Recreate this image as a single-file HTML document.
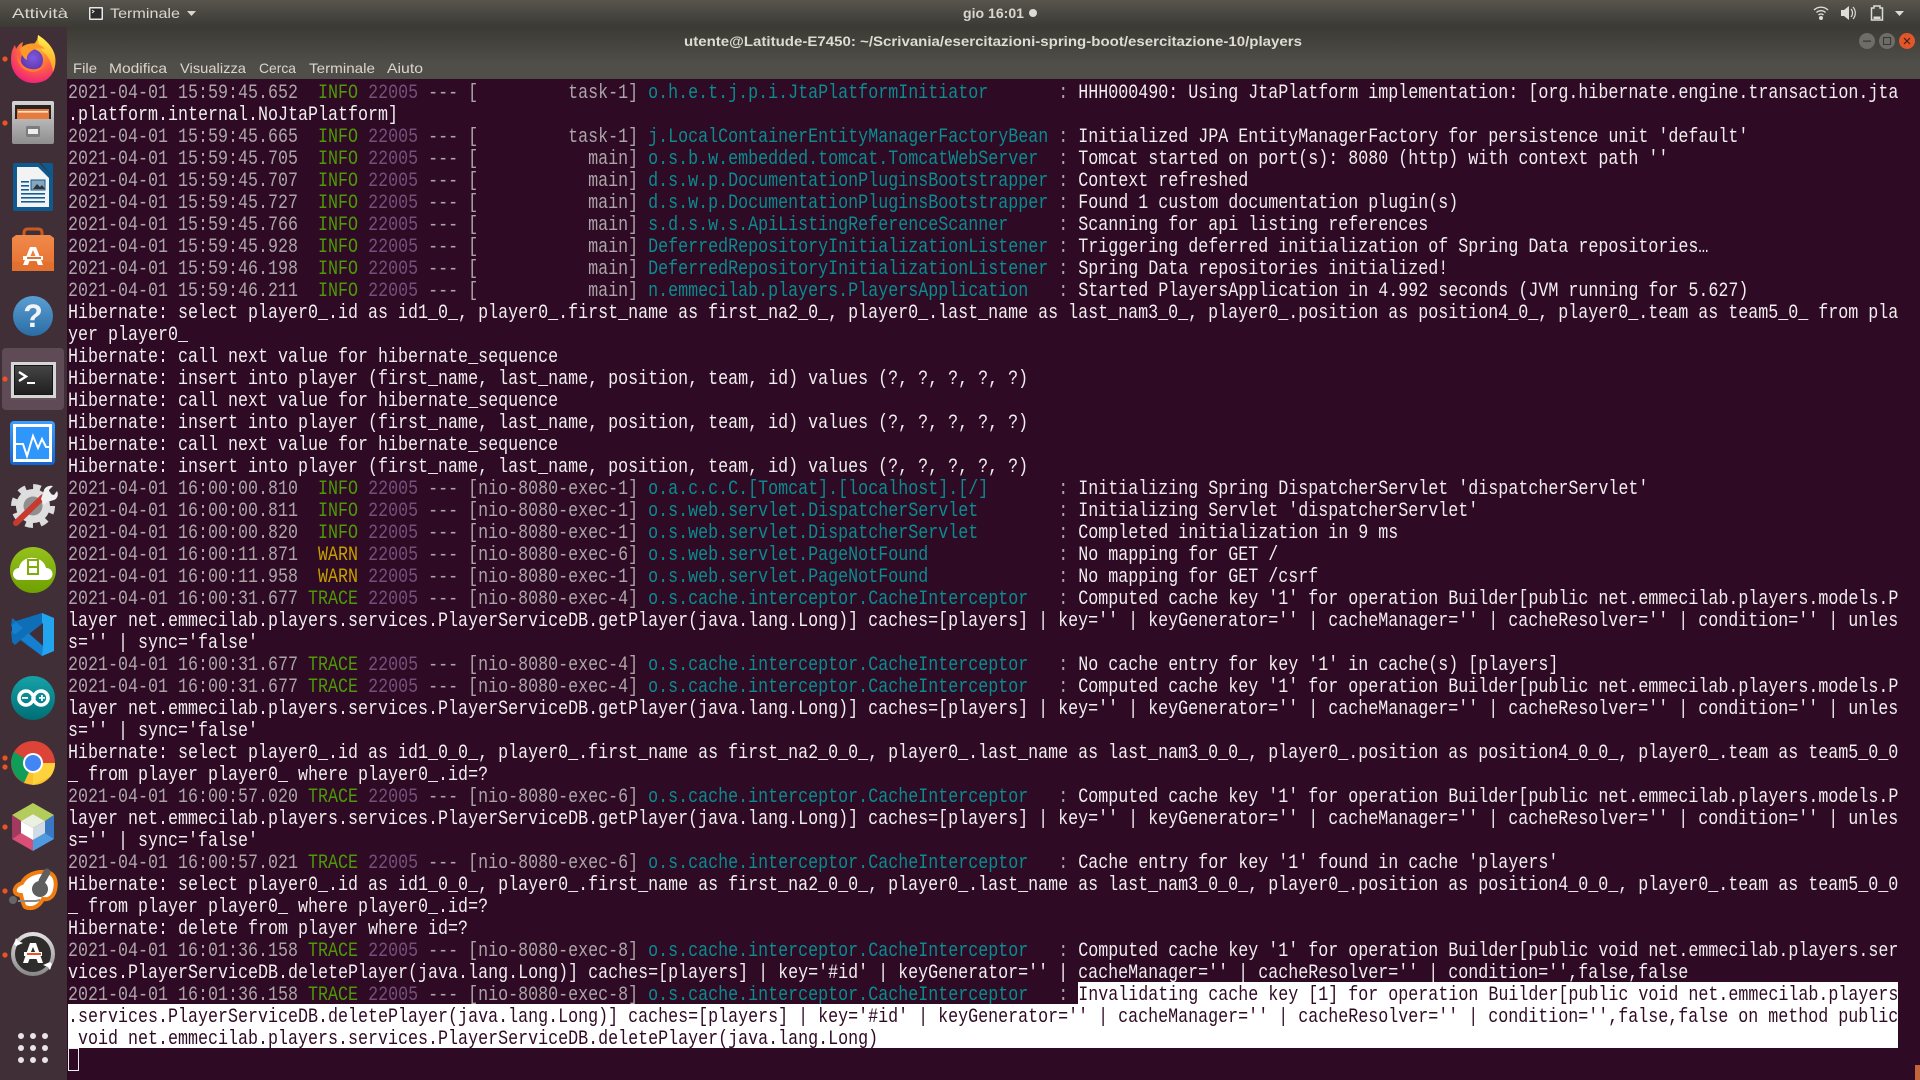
<!DOCTYPE html>
<html><head><meta charset="utf-8">
<style>
html,body{margin:0;padding:0;width:1920px;height:1080px;overflow:hidden;background:#2e0a24}
#panel{position:absolute;left:0;top:0;width:1920px;height:27px;background:linear-gradient(#57554d,#3b3a35)}
#title{position:absolute;left:67px;top:27px;width:1853px;height:52px;background:linear-gradient(#3b3a35,#45443e 35%,#504e48 70%,#504e48)}
#dock{position:absolute;left:0;top:27px;width:67px;height:1053px;background:#412f38}
#term{position:absolute;left:67px;top:79px;width:1853px;height:1001px;background:#2e0a24}
#ui{position:absolute;left:0;top:0}
#t{position:absolute;left:68px;top:83px;width:2196px;transform:scaleX(.83333);transform-origin:0 0;font:20px/22px "Liberation Mono",monospace;color:#f0eeee;white-space:pre}
#t div{height:22px}
.d{color:#aba5a8}.g{color:#4e9a06}.y{color:#c4a000}.m{color:#75507b}.c{color:#0a8c90}
#sel{position:absolute;left:68px;top:982px;width:1830px;height:66px}
#sel i{position:absolute;background:#fff;display:block}
#cur{position:absolute;left:68px;top:1048px;width:9px;height:21px;border:1px solid #eee}
#corner{position:absolute;left:1915px;top:1065px;width:5px;height:15px;background:#c4643a}
</style></head><body>
<div id="panel"></div><div id="title"></div><div id="dock"></div><div id="term"></div>
<div id="sel"><i style="left:1010px;top:0;width:820px;height:22px"></i><i style="left:0;top:22px;width:1830px;height:44px"></i></div>
<div id="t"><div><span class="d">2021-04-01 15:59:45.652 </span> <span class="g">INFO</span> <span class="m">22005</span> <span class="d">--- [         task-1]</span> <span class="c">o.h.e.t.j.p.i.JtaPlatformInitiator      </span> <span class="d">:</span> HHH000490: Using JtaPlatform implementation: [org.hibernate.engine.transaction.jta</div><div>.platform.internal.NoJtaPlatform]</div><div><span class="d">2021-04-01 15:59:45.665 </span> <span class="g">INFO</span> <span class="m">22005</span> <span class="d">--- [         task-1]</span> <span class="c">j.LocalContainerEntityManagerFactoryBean</span> <span class="d">:</span> Initialized JPA EntityManagerFactory for persistence unit 'default'</div><div><span class="d">2021-04-01 15:59:45.705 </span> <span class="g">INFO</span> <span class="m">22005</span> <span class="d">--- [           main]</span> <span class="c">o.s.b.w.embedded.tomcat.TomcatWebServer </span> <span class="d">:</span> Tomcat started on port(s): 8080 (http) with context path ''</div><div><span class="d">2021-04-01 15:59:45.707 </span> <span class="g">INFO</span> <span class="m">22005</span> <span class="d">--- [           main]</span> <span class="c">d.s.w.p.DocumentationPluginsBootstrapper</span> <span class="d">:</span> Context refreshed</div><div><span class="d">2021-04-01 15:59:45.727 </span> <span class="g">INFO</span> <span class="m">22005</span> <span class="d">--- [           main]</span> <span class="c">d.s.w.p.DocumentationPluginsBootstrapper</span> <span class="d">:</span> Found 1 custom documentation plugin(s)</div><div><span class="d">2021-04-01 15:59:45.766 </span> <span class="g">INFO</span> <span class="m">22005</span> <span class="d">--- [           main]</span> <span class="c">s.d.s.w.s.ApiListingReferenceScanner    </span> <span class="d">:</span> Scanning for api listing references</div><div><span class="d">2021-04-01 15:59:45.928 </span> <span class="g">INFO</span> <span class="m">22005</span> <span class="d">--- [           main]</span> <span class="c">DeferredRepositoryInitializationListener</span> <span class="d">:</span> Triggering deferred initialization of Spring Data repositories…</div><div><span class="d">2021-04-01 15:59:46.198 </span> <span class="g">INFO</span> <span class="m">22005</span> <span class="d">--- [           main]</span> <span class="c">DeferredRepositoryInitializationListener</span> <span class="d">:</span> Spring Data repositories initialized!</div><div><span class="d">2021-04-01 15:59:46.211 </span> <span class="g">INFO</span> <span class="m">22005</span> <span class="d">--- [           main]</span> <span class="c">n.emmecilab.players.PlayersApplication  </span> <span class="d">:</span> Started PlayersApplication in 4.992 seconds (JVM running for 5.627)</div><div>Hibernate: select player0_.id as id1_0_, player0_.first_name as first_na2_0_, player0_.last_name as last_nam3_0_, player0_.position as position4_0_, player0_.team as team5_0_ from pla</div><div>yer player0_</div><div>Hibernate: call next value for hibernate_sequence</div><div>Hibernate: insert into player (first_name, last_name, position, team, id) values (?, ?, ?, ?, ?)</div><div>Hibernate: call next value for hibernate_sequence</div><div>Hibernate: insert into player (first_name, last_name, position, team, id) values (?, ?, ?, ?, ?)</div><div>Hibernate: call next value for hibernate_sequence</div><div>Hibernate: insert into player (first_name, last_name, position, team, id) values (?, ?, ?, ?, ?)</div><div><span class="d">2021-04-01 16:00:00.810 </span> <span class="g">INFO</span> <span class="m">22005</span> <span class="d">--- [nio-8080-exec-1]</span> <span class="c">o.a.c.c.C.[Tomcat].[localhost].[/]      </span> <span class="d">:</span> Initializing Spring DispatcherServlet 'dispatcherServlet'</div><div><span class="d">2021-04-01 16:00:00.811 </span> <span class="g">INFO</span> <span class="m">22005</span> <span class="d">--- [nio-8080-exec-1]</span> <span class="c">o.s.web.servlet.DispatcherServlet       </span> <span class="d">:</span> Initializing Servlet 'dispatcherServlet'</div><div><span class="d">2021-04-01 16:00:00.820 </span> <span class="g">INFO</span> <span class="m">22005</span> <span class="d">--- [nio-8080-exec-1]</span> <span class="c">o.s.web.servlet.DispatcherServlet       </span> <span class="d">:</span> Completed initialization in 9 ms</div><div><span class="d">2021-04-01 16:00:11.871 </span> <span class="y">WARN</span> <span class="m">22005</span> <span class="d">--- [nio-8080-exec-6]</span> <span class="c">o.s.web.servlet.PageNotFound            </span> <span class="d">:</span> No mapping for GET /</div><div><span class="d">2021-04-01 16:00:11.958 </span> <span class="y">WARN</span> <span class="m">22005</span> <span class="d">--- [nio-8080-exec-1]</span> <span class="c">o.s.web.servlet.PageNotFound            </span> <span class="d">:</span> No mapping for GET /csrf</div><div><span class="d">2021-04-01 16:00:31.677</span> <span class="g">TRACE</span> <span class="m">22005</span> <span class="d">--- [nio-8080-exec-4]</span> <span class="c">o.s.cache.interceptor.CacheInterceptor  </span> <span class="d">:</span> Computed cache key '1' for operation Builder[public net.emmecilab.players.models.P</div><div>layer net.emmecilab.players.services.PlayerServiceDB.getPlayer(java.lang.Long)] caches=[players] | key='' | keyGenerator='' | cacheManager='' | cacheResolver='' | condition='' | unles</div><div>s='' | sync='false'</div><div><span class="d">2021-04-01 16:00:31.677</span> <span class="g">TRACE</span> <span class="m">22005</span> <span class="d">--- [nio-8080-exec-4]</span> <span class="c">o.s.cache.interceptor.CacheInterceptor  </span> <span class="d">:</span> No cache entry for key '1' in cache(s) [players]</div><div><span class="d">2021-04-01 16:00:31.677</span> <span class="g">TRACE</span> <span class="m">22005</span> <span class="d">--- [nio-8080-exec-4]</span> <span class="c">o.s.cache.interceptor.CacheInterceptor  </span> <span class="d">:</span> Computed cache key '1' for operation Builder[public net.emmecilab.players.models.P</div><div>layer net.emmecilab.players.services.PlayerServiceDB.getPlayer(java.lang.Long)] caches=[players] | key='' | keyGenerator='' | cacheManager='' | cacheResolver='' | condition='' | unles</div><div>s='' | sync='false'</div><div>Hibernate: select player0_.id as id1_0_0_, player0_.first_name as first_na2_0_0_, player0_.last_name as last_nam3_0_0_, player0_.position as position4_0_0_, player0_.team as team5_0_0</div><div>_ from player player0_ where player0_.id=?</div><div><span class="d">2021-04-01 16:00:57.020</span> <span class="g">TRACE</span> <span class="m">22005</span> <span class="d">--- [nio-8080-exec-6]</span> <span class="c">o.s.cache.interceptor.CacheInterceptor  </span> <span class="d">:</span> Computed cache key '1' for operation Builder[public net.emmecilab.players.models.P</div><div>layer net.emmecilab.players.services.PlayerServiceDB.getPlayer(java.lang.Long)] caches=[players] | key='' | keyGenerator='' | cacheManager='' | cacheResolver='' | condition='' | unles</div><div>s='' | sync='false'</div><div><span class="d">2021-04-01 16:00:57.021</span> <span class="g">TRACE</span> <span class="m">22005</span> <span class="d">--- [nio-8080-exec-6]</span> <span class="c">o.s.cache.interceptor.CacheInterceptor  </span> <span class="d">:</span> Cache entry for key '1' found in cache 'players'</div><div>Hibernate: select player0_.id as id1_0_0_, player0_.first_name as first_na2_0_0_, player0_.last_name as last_nam3_0_0_, player0_.position as position4_0_0_, player0_.team as team5_0_0</div><div>_ from player player0_ where player0_.id=?</div><div>Hibernate: delete from player where id=?</div><div><span class="d">2021-04-01 16:01:36.158</span> <span class="g">TRACE</span> <span class="m">22005</span> <span class="d">--- [nio-8080-exec-8]</span> <span class="c">o.s.cache.interceptor.CacheInterceptor  </span> <span class="d">:</span> Computed cache key '1' for operation Builder[public void net.emmecilab.players.ser</div><div>vices.PlayerServiceDB.deletePlayer(java.lang.Long)] caches=[players] | key='#id' | keyGenerator='' | cacheManager='' | cacheResolver='' | condition='',false,false</div><div><span class="d">2021-04-01 16:01:36.158</span> <span class="g">TRACE</span> <span class="m">22005</span> <span class="d">--- [nio-8080-exec-8]</span> <span class="c">o.s.cache.interceptor.CacheInterceptor  </span> <span class="d">:</span> <span style="color:#300a24">Invalidating cache key [1] for operation Builder[public void net.emmecilab.players</span></div><div style="color:#300a24">.services.PlayerServiceDB.deletePlayer(java.lang.Long)] caches=[players] | key='#id' | keyGenerator='' | cacheManager='' | cacheResolver='' | condition='',false,false on method public</div><div style="color:#300a24"> void net.emmecilab.players.services.PlayerServiceDB.deletePlayer(java.lang.Long)</div></div>
<div id="cur"></div><div id="corner"></div>
<svg id="ui" width="1920" height="1080" viewBox="0 0 1920 1080" xmlns="http://www.w3.org/2000/svg">
<defs>
<radialGradient id="ff" cx=".6" cy=".25" r=".85"><stop offset="0" stop-color="#ffbd2e"/><stop offset=".45" stop-color="#ff7139"/><stop offset=".8" stop-color="#f5336b"/><stop offset="1" stop-color="#e31587"/></radialGradient>
<linearGradient id="ffy" x1="0" y1="0" x2="0" y2="1"><stop offset="0" stop-color="#fff44f"/><stop offset="1" stop-color="#ff9a20"/></linearGradient>
<radialGradient id="ffp" cx=".55" cy=".4" r=".7"><stop offset="0" stop-color="#7f5ae0"/><stop offset="1" stop-color="#5a2ea6"/></radialGradient>
<linearGradient id="fc" x1="0" y1="0" x2="0" y2="1"><stop offset="0" stop-color="#d5d5d5"/><stop offset="1" stop-color="#8e8e8e"/></linearGradient>
<linearGradient id="fh" x1="0" y1="0" x2="0" y2="1"><stop offset="0" stop-color="#5a9fd4"/><stop offset="1" stop-color="#2a6da5"/></linearGradient>
<linearGradient id="st" x1="0" y1="0" x2="0" y2="1"><stop offset="0" stop-color="#ef8a4b"/><stop offset="1" stop-color="#e86f2e"/></linearGradient>
<linearGradient id="tm" x1="0" y1="0" x2="0" y2="1"><stop offset="0" stop-color="#454545"/><stop offset="1" stop-color="#1f1f1f"/></linearGradient>
<linearGradient id="dl" x1="0" y1="0" x2="0" y2="1"><stop offset="0" stop-color="#96c11f"/><stop offset="1" stop-color="#6ea000"/></linearGradient>
<linearGradient id="ar" x1="0" y1="0" x2="0" y2="1"><stop offset="0" stop-color="#16a2a8"/><stop offset="1" stop-color="#006e75"/></linearGradient>
<linearGradient id="mon" x1="0" y1="0" x2="0" y2="1"><stop offset="0" stop-color="#3aa0ff"/><stop offset="1" stop-color="#1464d0"/></linearGradient>
<linearGradient id="upd" x1="0" y1="0" x2="0" y2="1"><stop offset="0" stop-color="#e0e0e0"/><stop offset="1" stop-color="#8a8a8a"/></linearGradient>
</defs>
<g font-family="Liberation Sans, sans-serif" fill="#d9d6cd" font-size="14">
<text x="12" y="18" textLength="56" lengthAdjust="spacingAndGlyphs">Attività</text>
<rect x="89" y="7" width="14" height="13" rx="1" fill="#e8e8e8"/><rect x="90.500" y="8.500" width="11" height="10" fill="#2b2b2b"/><path d="M92 10l2 1.500-2 1.500" stroke="#eee" fill="none" stroke-width="1"/>
<text x="110" y="18" textLength="70" lengthAdjust="spacingAndGlyphs">Terminale</text>
<path d="M187 11h9l-4.500 5z"/>
<text x="963" y="18" textLength="61" lengthAdjust="spacingAndGlyphs" font-weight="bold" font-size="13.500">gio 16:01</text>
<circle cx="1033" cy="13" r="4" fill="#dcdad4"/>
<text x="684" y="46" textLength="618" lengthAdjust="spacingAndGlyphs" font-weight="bold" font-size="14" fill="#dfdbd2">utente@Latitude-E7450: ~/Scrivania/esercitazioni-spring-boot/esercitazione-10/players</text>
<g font-size="14">
<text x="73" y="73" textLength="24" lengthAdjust="spacingAndGlyphs">File</text>
<text x="109" y="73" textLength="58" lengthAdjust="spacingAndGlyphs">Modifica</text>
<text x="180" y="73" textLength="66" lengthAdjust="spacingAndGlyphs">Visualizza</text>
<text x="259" y="73" textLength="37" lengthAdjust="spacingAndGlyphs">Cerca</text>
<text x="309" y="73" textLength="66" lengthAdjust="spacingAndGlyphs">Terminale</text>
<text x="387" y="73" textLength="36" lengthAdjust="spacingAndGlyphs">Aiuto</text>
</g>
</g>
<!-- tray -->
<g fill="#dedcd6">
<path d="M1814 10a10 10 0 0 1 14 0" fill="none" stroke="#dedcd6" stroke-width="1.400"/><path d="M1816.500 12.500a6.500 6.500 0 0 1 9 0" fill="none" stroke="#dedcd6" stroke-width="1.400"/><path d="M1818.500 15a3.500 3.500 0 0 1 5 0" fill="none" stroke="#dedcd6" stroke-width="1.400"/><circle cx="1821" cy="18" r="2"/>
<path d="M1841 10h3l5-4v14l-5-4h-3z"/><path d="M1851 9a6 6 0 0 1 0 8M1853 7a9 9 0 0 1 0 12" fill="none" stroke="#dedcd6" stroke-width="1.200"/>
<path d="M1874 6h6v2h2.500v12h-11v-12h2.500z" fill="none" stroke="#dedcd6" stroke-width="1.500"/><rect x="1873.500" y="16.500" width="7" height="2.500"/>
<path d="M1895 11h9l-4.500 5z"/>
</g>
<!-- window buttons -->
<circle cx="1867" cy="41" r="8" fill="#6e6d67"/><rect x="1863" y="40.500" width="8" height="1.300" fill="#3a3935"/>
<circle cx="1887" cy="41" r="8" fill="#6e6d67"/><rect x="1883.500" y="37.500" width="7" height="7" fill="none" stroke="#3a3935" stroke-width="1.100"/>
<circle cx="1907" cy="41" r="8" fill="#e2562a"/><path d="M1904 38l6 6M1910 38l-6 6" stroke="#4a2015" stroke-width="1.200"/>
<!-- dock -->
<rect x="2" y="348" width="62" height="62" rx="4" fill="#5f4b55"/>
<!-- running dots -->
<g fill="#e95420"><circle cx="5" cy="59" r="2.600"/><circle cx="5" cy="123" r="2.600"/><circle cx="5" cy="379" r="2.600"/><circle cx="5" cy="758" r="2.600"/><circle cx="5" cy="767" r="2.600"/><circle cx="5" cy="827" r="2.600"/><circle cx="5" cy="891" r="2.600"/><circle cx="5" cy="955" r="2.600"/></g>
<!-- firefox -->
<g>
<path d="M38 35c8 5 15 12 17 21 2 12-3 20-9 24-4 2-8 3-13 3-12 0-22-10-22-23 0-6 1-11 4-15l1 4c2-3 4-6 7-7l-1 5c3-2 8-3 11-2 3-3 5-6 5-10z" fill="url(#ff)"/>
<path d="M38 35c8 5 15 12 17 21 1 7 0 12-2 16-1-9-5-17-11-21-3-6-5-11-4-16z" fill="url(#ffy)"/>
<circle cx="32" cy="60" r="11" fill="url(#ffp)"/>
<path d="M20 49c3-4 10-7 17-5 5 1 8 5 8 5-4-1-9-1-12 1-4 2-7 6-6 10-3-1-6-6-7-11z" fill="#ff9a28"/>
<path d="M17 54c0 9 5 17 15 18 7 0 12-4 14-9-3 4-9 7-15 6-8-1-12-8-14-15z" fill="#ff7a32"/>
</g>
<!-- files -->
<g>
<rect x="12" y="101" width="42" height="43" rx="2" fill="url(#fc)"/>
<rect x="15" y="105" width="36" height="14" fill="#2b2320"/>
<rect x="17" y="109" width="32" height="10" fill="#e77a3d"/><rect x="18" y="111" width="30" height="1.600" fill="#f7e4d3"/>
<rect x="26" y="126" width="14" height="11" rx="1.500" fill="#7c7c7c"/><rect x="28" y="129" width="10" height="5" fill="#ededed"/>
</g>
<!-- writer -->
<g>
<path d="M13 165q0-2 2-2h24l14 14v32q0 2-2 2h-36q-2 0-2-2z" fill="#0e5a8f"/>
<path d="M41 163h10q2 0 2 2v12z" fill="#0e5a8f"/>
<path d="M17 167h21l11 11v29h-32z" fill="#f2f3f2"/>
<g fill="#125f95"><rect x="21" y="181" width="8" height="1.600"/><rect x="21" y="185" width="8" height="1.600"/><rect x="21" y="189" width="8" height="1.600"/><rect x="21" y="193" width="24" height="1.600"/><rect x="21" y="197" width="24" height="1.600"/><rect x="21" y="201" width="24" height="1.600"/></g>
<rect x="31" y="180" width="14" height="10" fill="#85a6bd" stroke="#125f95"/><path d="M33 189l4-5 3 3 2-2 3 4z" fill="#333"/>
</g>
<!-- store -->
<g>
<path d="M24 238v-5q0-4 4-4h10q4 0 4 4v5" fill="none" stroke="#c95b22" stroke-width="3"/>
<path d="M16 235h34l4 3v33H12v-33z" fill="url(#st)"/>
<rect x="12" y="262" width="42" height="9" fill="#e2702f"/>
<path d="M30 247h6l7 18h-5l-1.500-4h-7l-1.500 4h-5z" fill="#fff"/>
<path d="M33 250l-2.500 6h5z" fill="#ec7f3f"/>
<rect x="23" y="256" width="20" height="4" fill="#fff"/><rect x="27" y="257" width="14" height="2" fill="#e2702f"/>
</g>
<!-- help -->
<g>
<circle cx="33" cy="316" r="20" fill="url(#fh)"/>
<text x="33" y="327" text-anchor="middle" font-family="Liberation Sans, sans-serif" font-weight="bold" font-size="32" fill="#f4f4f4">?</text>
</g>
<!-- terminal -->
<g>
<rect x="10" y="363" width="46" height="37" fill="#6b5a62" opacity=".5"/>
<rect x="11" y="362" width="45" height="36" fill="#d6d6d6"/>
<rect x="14" y="365" width="39" height="30" fill="#151515"/>
<rect x="15" y="366" width="37" height="28" fill="url(#tm)"/>
<path d="M19 372l7 4.500-7 4.500" fill="none" stroke="#fff" stroke-width="2.400"/>
<rect x="27" y="382" width="8" height="2" fill="#fff"/>
</g>
<!-- monitor -->
<g>
<rect x="10" y="421" width="45" height="44" rx="4" fill="url(#mon)"/>
<rect x="13" y="424" width="39" height="38" fill="#fff"/>
<rect x="16" y="427" width="33" height="32" fill="#2f96fb"/>
<path d="M16 444h7l4 12 6-20 5 12 4-9 4 8h3" fill="none" stroke="#fff" stroke-width="2"/>
</g>
<!-- tools -->
<g>
<circle cx="33" cy="506" r="19" fill="none" stroke="#dcdcdc" stroke-width="6" stroke-dasharray="7.500 7.420"/>
<circle cx="33" cy="506" r="17" fill="#dedede"/>
<circle cx="33" cy="506" r="9.500" fill="#8f8f8f"/>
<path d="M16 523l27-26" stroke="#c63a30" stroke-width="6" stroke-linecap="round"/>
<path d="M41 499l3-9c1-3 5-5 9-4l-4 4 1 4 4 1 3-4c2 4 0 8-3 9l-7 2-3 3z" fill="#f0f0f0"/>
</g>
<!-- download -->
<g>
<circle cx="33" cy="570" r="23" fill="url(#dl)"/>
<path d="M19 580a6 6 0 0 1 0-12c1-7 8-11 14-10 6 0 12 4 13 10a6 6 0 0 1 1 12z" fill="#fff"/>
<rect x="27" y="559" width="12" height="16" fill="#7fae0a"/><rect x="29" y="561" width="8" height="5" fill="#fff"/><rect x="29" y="568" width="8" height="5" fill="#fff"/>
</g>
<!-- vscode -->
<g>
<path d="M42 613l12 5v33l-12 5-26-19-4 3-1-8 3-3-3-3 1-8 4 3z" fill="#0f6eb8"/>
<path d="M42 613l12 5v33l-12 5z" fill="#23a4ee"/>
<path d="M43 623v23l-14-12z" fill="#412f38"/>
<path d="M12 625l4-3 27 24-1 10-30-24z" fill="#1480cf"/>
<path d="M12 642l3 3 27-24 0-8-30 24z" fill="#0f6eb8"/>
</g>
<!-- arduino -->
<g>
<circle cx="33" cy="698" r="22" fill="url(#ar)"/>
<path d="M26 691a7 7 0 1 0 0 14c6 0 8-7 8-7s-2-7-8-7zM41 691a7 7 0 1 1 0 14c-6 0-8-7-8-7s2-7 8-7z" fill="none" stroke="#fff" stroke-width="3.600"/>
<rect x="22" y="697" width="6" height="1.800" fill="#fff"/><path d="M39 697h6v1.800h-6zM41 695h1.800v6H41z" fill="#fff"/>
</g>
<!-- chrome -->
<g>
<circle cx="33" cy="763" r="22" fill="#db4437"/>
<path d="M33 763L14 752a22 22 0 0 0 11 31z" fill="#0f9d58"/>
<path d="M33 763l22 0a22 22 0 0 1-22 22l-9-2z" fill="#fbc02d"/>
<path d="M33 763L43 763 55 763a22 22 0 0 1-4.500 13.500L33 785z" fill="#fdd23c"/>
<circle cx="33" cy="763" r="10" fill="#fff"/><circle cx="33" cy="763" r="8" fill="#4285f4"/>
</g>
<!-- netbeans -->
<g>
<path d="M33 803l21 12v24l-21 12-21-12v-24z" fill="#333"/>
<path d="M33 803l21 12-9 6-12-7-12 7-9-6z" fill="#b4cd5a"/>
<path d="M12 815l9 6v12l-9 6z" fill="#a13a5e"/>
<path d="M54 815l-9 6v12l9 6z" fill="#3a78c6"/>
<path d="M12 839l9-6 12 7v11z" fill="#d94f78"/>
<path d="M54 839l-9-6-12 7v11z" fill="#4f9be0"/>
<path d="M33 814l12 7-12 7-12-7z" fill="#ecf0e0"/><path d="M21 821l12 7v12l-12-7z" fill="#fff"/><path d="M45 821l-12 7v12l12-7z" fill="#d0dbe6"/>
</g>
<!-- orange headset -->
<g>
<path d="M22 883c4-8 14-12 24-11 9 1 11 9 9 18-2 8-7 10-12 9-4 8-11 11-18 8-2-2-3-8-4-12-4 0-7-2-6-6 1-3 4-5 7-6z" fill="#fff" stroke="#f07d10" stroke-width="4"/>
<circle cx="40" cy="889" r="8" fill="#5f5f5f"/><path d="M42 881l5-9" stroke="#5f5f5f" stroke-width="7" stroke-linecap="round"/>
<path d="M18 901h18l4-1" stroke="#888" stroke-width="2" fill="none"/><circle cx="13" cy="900" r="4" fill="#666"/>
</g>
<!-- updater -->
<g>
<circle cx="33" cy="954" r="20.500" fill="#2f2d2b"/>
<circle cx="33" cy="954" r="20" fill="none" stroke="url(#upd)" stroke-width="4"/>
<path d="M14 944l2-6 2 3 5 2-7 3z" fill="#fff"/><path d="M52 964l-2 6-2-3-5-2 7-3z" fill="#fff"/>
<path d="M30 943h6l7 20h-5l-1.500-4h-7l-1.500 4h-5z" fill="#fff"/>
<path d="M33 947l-2.500 6h5z" fill="#2f2d2b"/>
<rect x="24" y="952" width="18" height="4" fill="#fff"/><rect x="27" y="953" width="14" height="2" fill="#e95420"/>
</g>
<!-- grid -->
<g fill="#e9e5e7"><circle cx="21" cy="1036" r="3"/><circle cx="33" cy="1036" r="3"/><circle cx="45" cy="1036" r="3"/><circle cx="21" cy="1048" r="3"/><circle cx="33" cy="1048" r="3"/><circle cx="45" cy="1048" r="3"/><circle cx="21" cy="1060" r="3"/><circle cx="33" cy="1060" r="3"/><circle cx="45" cy="1060" r="3"/></g>
</svg>
</body></html>
